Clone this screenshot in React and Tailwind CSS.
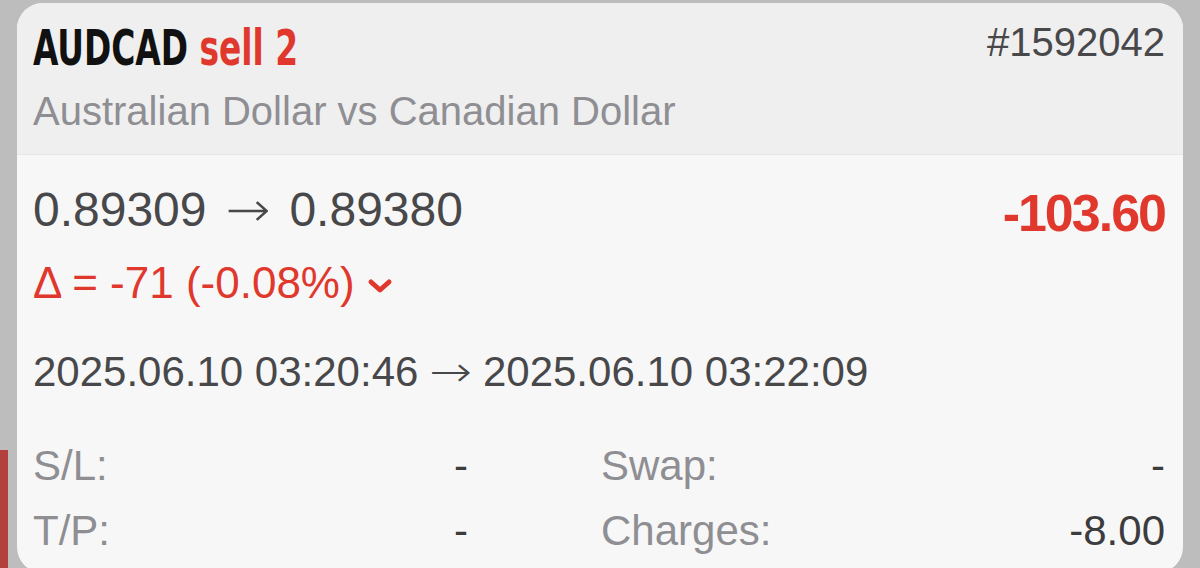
const sans = { fontFamily: '"Liberation Sans", Arial, sans-serif' };
const arrowFont = { fontFamily: '"DejaVu Sans", sans-serif' };

const Chevron = () => (
  <svg width="26" height="18" viewBox="0 0 26 18" className="ml-[12px] mt-[6px]">
    <polyline
      points="4,5 13,13 22,5"
      fill="none"
      stroke="#e0382d"
      strokeWidth="5"
      strokeLinecap="round"
      strokeLinejoin="round"
    />
  </svg>
);

const Row = ({ label, value, right, rightValue, className }) => (
  <div className={`grid grid-cols-[435px_1fr] gap-x-[133px] h-[44px] leading-[44px] text-[42px] ${className}`}>
    <div className="flex justify-between">
      <span className="text-[#8e8e93]">{label}</span>
      <span className="text-[#3c3c3e]">{value}</span>
    </div>
    <div className="flex justify-between">
      <span className="text-[#8e8e93]">{right}</span>
      <span className="text-[#3c3c3e]">{rightValue}</span>
    </div>
  </div>
);

export default function App() {
  return (
    <div className="w-[1200px] h-[568px] bg-[#bdbdbd] overflow-hidden flex" style={sans}>
      {/* Left edge of the card behind */}
      <div className="w-[17px] shrink-0 flex flex-col justify-end">
        <div className="w-[8px] h-[118px] bg-[#b3403c]" />
      </div>

      {/* Card */}
      <div className="w-[1166px] h-[570px] mt-[3px] shrink-0 rounded-[26px] overflow-hidden bg-[#f7f7f7]">
        {/* Header */}
        <div className="h-[152px] bg-[#efefef] border-b border-[#e6e6e6] pl-[16px] pr-[18px] pt-[19px]">
          <div className="flex justify-between items-start">
            <div
              className="h-[52px] leading-[52px] text-[50px] font-bold whitespace-nowrap origin-left scale-x-[0.73]"
              style={{ fontFamily: '"DejaVu Sans Condensed", sans-serif' }}
            >
              <span className="text-[#111111]">AUDCAD</span>{" "}
              <span className="text-[#e0382d]">sell 2</span>
            </div>
            <div className="h-[40px] leading-[40px] text-[40px] text-[#48484a]">#1592042</div>
          </div>
          <div className="mt-[17px] h-[40px] leading-[40px] text-[40px] text-[#8e8e93]">
            Australian Dollar vs Canadian Dollar
          </div>
        </div>

        {/* Body */}
        <div className="pl-[16px] pr-[18px] pt-[30px]">
          <div className="flex justify-between items-start">
            <div className="h-[48px] leading-[48px] text-[48px] text-[#48484a] whitespace-nowrap">
              0.89309{" "}
              <span className="inline-block mx-[8px] scale-x-[1.12] font-light" style={arrowFont}>→</span>{" "}
              0.89380
            </div>
            <div className="mt-[2px] h-[52px] leading-[52px] text-[52px] font-bold text-[#e0382d] tracking-[-2px]">
              -103.60
            </div>
          </div>

          <div className="mt-[22px] flex items-center h-[44px] leading-[44px] text-[44px] text-[#e0382d]">
            <span>Δ = -71 (-0.08%)</span>
            <Chevron />
          </div>

          <div className="mt-[45px] h-[44px] leading-[44px] text-[42px] text-[#48484a] whitespace-nowrap">
            2025.06.10 03:20:46{" "}
            <span className="inline-block mx-[3px] scale-x-[1.22] font-light" style={arrowFont}>→</span>{" "}
            2025.06.10 03:22:09
          </div>

          <Row className="mt-[50px]" label="S/L:" value="-" right="Swap:" rightValue="-" />
          <Row className="mt-[21px]" label="T/P:" value="-" right="Charges:" rightValue="-8.00" />
        </div>
      </div>
    </div>
  );
}
